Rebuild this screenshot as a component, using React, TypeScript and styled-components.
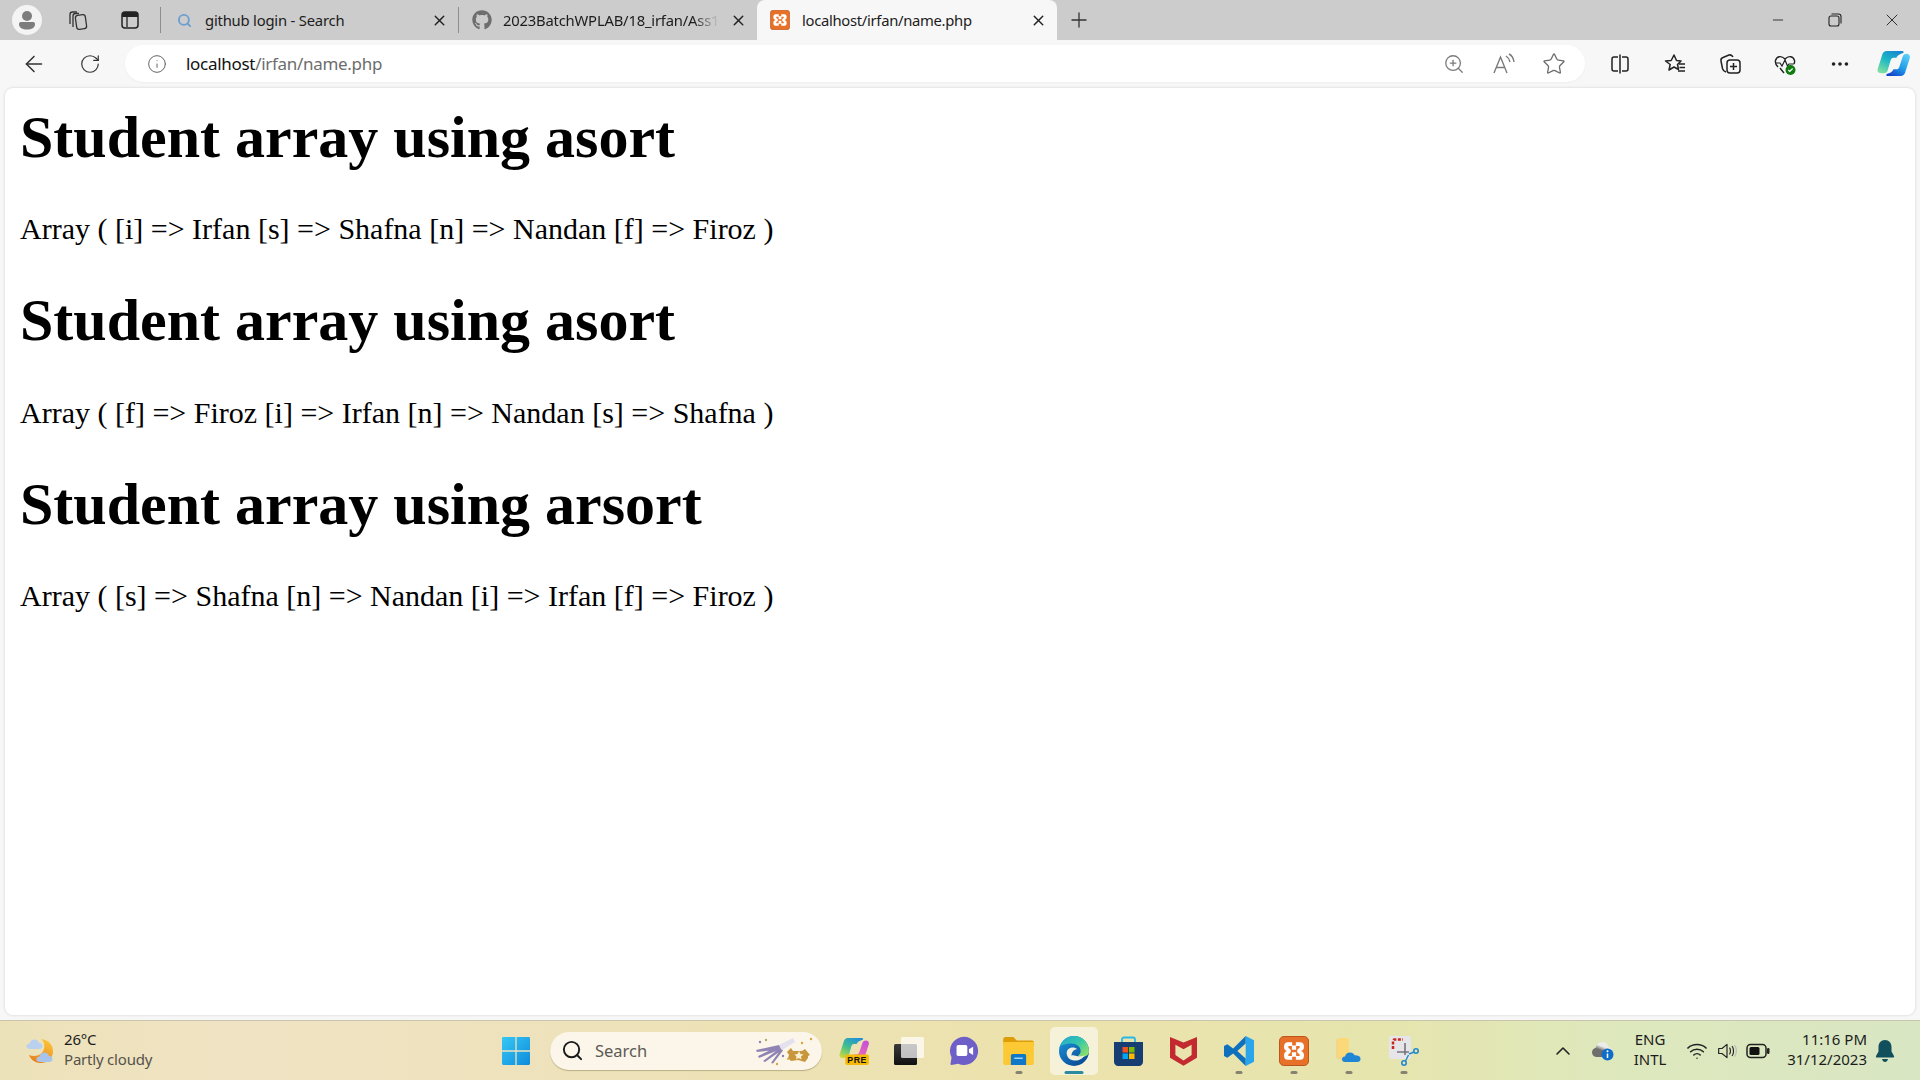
import React from 'react';
import styled, { createGlobalStyle } from 'styled-components';
import { FaGithub } from 'react-icons/fa';
import { ArrowLeft, RotateCw, Info, ZoomIn, Star, X, Plus, Minus, Search, ChevronUp, Wifi, Ellipsis } from 'lucide-react';

const GlobalStyle = createGlobalStyle`
  html, body { margin: 0; padding: 0; overflow: hidden; background: #f7f7f7; }
`;

const uiFont = `"Noto Sans", "Open Sans", sans-serif`;

const Shell = styled.div`
  width: 1920px;
  height: 1080px;
  display: flex;
  flex-direction: column;
  font-family: ${uiFont};
  color: #1c1c1c;
`;

/* tab strip */
const TabStrip = styled.div`
  height: 40px;
  flex: none;
  display: flex;
  background: #cccccc;
`;
const StripButtons = styled.div`
  width: 160px;
  flex: none;
  display: flex;
  align-items: center;
  padding-left: 8px;
  box-sizing: border-box;
`;
const StripButton = styled.div<{ $w: number }>`
  width: ${p => p.$w}px;
  flex: none;
  display: flex;
  align-items: center;
  justify-content: center;
`;
const Tab = styled.div<{ $w: number }>`
  width: ${p => p.$w}px;
  flex: none;
  display: flex;
  align-items: center;
  box-sizing: border-box;
  padding: 0 10px 0 13px;
  gap: 11px;
  font-size: 14.8px;
  letter-spacing: -0.2px;
`;
const InactiveTab = styled(Tab)`
  height: 26px;
  align-self: center;
  border-left: 1px solid #8e8e8e;
`;
const ActiveTab = styled(Tab)`
  background: #f7f7f7;
  border-radius: 8px 8px 0 0;
  gap: 12px;
  letter-spacing: -0.3px;
`;
const TabIcon = styled.div`
  width: 20px;
  flex: none;
  display: flex;
  align-items: center;
  justify-content: center;
`;
const TabTitle = styled.span<{ $fade?: boolean }>`
  flex: 1;
  min-width: 0;
  white-space: nowrap;
  ${p =>
    p.$fade
      ? `-webkit-mask-image: linear-gradient(to right, #000 88%, transparent 100%); mask-image: linear-gradient(to right, #000 88%, transparent 100%);`
      : ''}
`;
const WindowControls = styled.div`
  margin-left: auto;
  display: flex;
  align-items: center;
`;

/* toolbar */
const Toolbar = styled.div`
  height: 48px;
  flex: none;
  display: flex;
  align-items: flex-start;
  padding: 5px 0 0 6px;
  box-sizing: border-box;
  background: #f7f7f7;
`;
const ToolButton = styled.div<{ $w: number }>`
  width: ${p => p.$w}px;
  height: 37px;
  flex: none;
  display: flex;
  align-items: center;
  justify-content: center;
`;
const AddressBar = styled.div`
  width: 1460px;
  height: 37px;
  margin: 0 7px;
  flex: none;
  display: flex;
  align-items: center;
  box-sizing: border-box;
  padding: 0 6px 0 22px;
  background: #fff;
  border-radius: 19px;
  box-shadow: 0 1px 2px rgba(0, 0, 0, 0.04);
`;
const Url = styled.div`
  margin-left: 19px;
  font-size: 17px;
  letter-spacing: -0.3px;
  color: #6d6d6d;
  flex: 1;
  b {
    font-weight: 400;
    color: #111;
  }
`;

/* page content */
const Content = styled.div`
  flex: 1;
  min-height: 0;
  padding: 0 5px 5px;
  display: flex;
  background: #f7f7f7;
`;
const PageCard = styled.div`
  flex: 1;
  background: #fff;
  border-radius: 8px;
  box-shadow: 0 0 3px rgba(0, 0, 0, 0.16);
  padding: 15px 15px 0;
  font-family: "Liberation Serif", "Times New Roman", serif;
  color: #000;
`;
const Heading = styled.h1`
  font-size: 60px;
  font-weight: 700;
  margin: 0.67em 0;
  &:first-child {
    margin-top: 0;
  }
`;
const Output = styled.p`
  font-size: 30px;
  margin: 30px 0;
`;

/* taskbar */
const Taskbar = styled.div`
  height: 60px;
  flex: none;
  display: flex;
  align-items: center;
  box-sizing: border-box;
  border-top: 1px solid #c9c5ac;
  background: linear-gradient(90deg, #ece2b8 0%, #f0e3c4 12%, #eee2bb 30%, #ece2ac 55%, #e6e5ae 72%, #dde8bd 85%, #d9e6c3 100%);
  font-size: 15px;
`;
const Weather = styled.div`
  width: 488px;
  flex: none;
  display: flex;
  align-items: center;
  box-sizing: border-box;
  padding-left: 26px;
  gap: 8px;
`;
const WeatherText = styled.div`
  line-height: 20px;
  font-size: 15px;
  letter-spacing: -0.2px;
  margin-top: -4px;
  span {
    display: block;
    color: #55524a;
  }
`;
const TaskIcon = styled.div<{ $active?: boolean; $running?: boolean }>`
  width: ${p => (p.$active ? '48px' : '55px')};
  margin: ${p => (p.$active ? '0 3.5px' : '0')};
  height: 48px;
  flex: none;
  box-sizing: border-box;
  display: flex;
  align-items: center;
  justify-content: center;
  position: relative;
  border-radius: 5px;
  background: ${p => (p.$active ? 'rgba(255,255,255,.55)' : 'transparent')};
  &::after {
    content: '';
    display: ${p => (p.$running || p.$active ? 'block' : 'none')};
    position: absolute;
    bottom: 1px;
    left: 50%;
    transform: translateX(-50%);
    width: ${p => (p.$active ? '19px' : '7px')};
    height: 3px;
    border-radius: 2px;
    background: ${p => (p.$active ? '#2c8aa0' : '#85826f')};
  }
`;
const TaskbarSearch = styled.div`
  width: 272px;
  height: 38px;
  margin: 0 4px 0 7px;
  flex: none;
  box-sizing: border-box;
  display: flex;
  align-items: center;
  padding: 0 7px 0 11px;
  gap: 11px;
  border-radius: 19px;
  background: #fbf6e9;
  box-shadow: 0 1px 1px rgba(120, 110, 70, 0.45);
  font-size: 16.5px;
  color: #5d5a54;
`;
const SearchDecor = styled.div`
  margin-left: auto;
  display: flex;
`;
const Tray = styled.div`
  margin-left: auto;
  display: flex;
  align-items: center;
  padding-right: 17px;
`;
const TrayItem = styled.div<{ $w: number; $end?: boolean }>`
  width: ${p => p.$w}px;
  flex: none;
  display: flex;
  align-items: center;
  justify-content: ${p => (p.$end ? 'flex-end' : 'center')};
`;
const TrayText = styled.div<{ $align: string }>`
  line-height: 20px;
  font-size: 15px;
  margin-top: -3px;
  text-align: ${p => p.$align};
  white-space: nowrap;
`;

/* drawings */
const Avatar = () => (
  <svg width="30" height="30" viewBox="0 0 30 30">
    <circle cx="15" cy="15" r="15" fill="#f4f4f4" />
    <circle cx="15" cy="11" r="5" fill="#7d7d7d" />
    <path d="M7 19c0-1.500 1-2 2.500-2h11c1.500 0 2.500.5 2.500 2 0 4-3.500 5.500-8 5.500S7 23 7 19z" fill="#7d7d7d" />
  </svg>
);
const Workspaces = () => (
  <svg width="24" height="24" viewBox="0 0 24 24" fill="none" stroke="#333" strokeWidth="1.3">
    <path d="M5 16V6.500C5 5 6 4 7.500 4H12" />
    <path d="M8 19V8c0-1.500 1-2.500 2.500-2.500H14" />
    <rect x="11" y="7" width="10" height="14" rx="2.500" transform="rotate(-8 16 14)" />
  </svg>
);
const TabsIcon = () => (
  <svg width="22" height="22" viewBox="0 0 22 22" fill="none">
    <rect x="3" y="3" width="16" height="16" rx="3" stroke="#222" strokeWidth="1.500" />
    <path d="M3 6c0-2 1-3 3-3h10c2 0 3 1 3 3v2H3z" fill="#222" />
    <path d="M8 8v10" stroke="#222" strokeWidth="1.300" />
  </svg>
);
const Xampp = ({ size }: { size: number }) => (
  <svg width={size} height={size} viewBox="0 0 24 24">
    <rect x="0.400" y="0.400" width="23.200" height="23.200" rx="3.500" fill="#e8712a" stroke="#b9561c" strokeWidth="0.800" />
    <path
      d="M7 5h3.500v2.500h3V5H17c2 0 3 1.500 3 3.500 0 2-1 3-2.500 3.500 1.500.5 2.500 1.500 2.500 3.500S19 19 17 19h-3.500v-2.500h-3V19H7c-2 0-3-1.500-3-3.500S5 12.500 6.500 12C5 11.500 4 10.500 4 8.500S5 5 7 5z"
      fill="#fff"
    />
    <path d="M7.500 8h2.800v3h3.400V8h2.800v1.500c-1 .5-2 1-2 2.500s1 2 2 2.500V16h-2.800v-3h-3.400v3H7.500v-1.500c1-.5 2-1 2-2.500s-1-2-2-2.500z" fill="#e8712a" />
  </svg>
);
const SplitIcon = () => (
  <svg width="24" height="24" viewBox="0 0 24 24" fill="none" stroke="#222" strokeWidth="1.500">
    <path d="M10 5H6a2 2 0 0 0-2 2v10a2 2 0 0 0 2 2h4M14 5h4a2 2 0 0 1 2 2v10a2 2 0 0 1-2 2h-4M12 2.500v19" />
  </svg>
);
const FavoritesIcon = () => (
  <svg width="24" height="24" viewBox="0 0 24 24" fill="none" stroke="#222" strokeWidth="1.500" strokeLinejoin="round">
    <path d="M11 3l2.500 5.500 4.500.5-3.500 3.500 1 5-4.500-2.500-5 3 1.200-5.500L2.500 9l5.700-.5z" />
    <path d="M16 12h6M16.500 15.500H22M15 19h7" />
  </svg>
);
const CollectionsIcon = () => (
  <svg width="24" height="24" viewBox="0 0 24 24" fill="none" stroke="#222" strokeWidth="1.500">
    <path d="M8 20c-2-.5-3-1.500-3.500-3.500L3 9c-.4-2 .5-3 2-3.500L11 3c2-.5 3 0 4 2" />
    <rect x="9" y="8" width="13" height="13" rx="3" />
    <path d="M15.500 11v7M12 14.500h7" />
  </svg>
);
const HealthIcon = () => (
  <svg width="24" height="24" viewBox="0 0 24 24" fill="none">
    <path d="M5 15C3 13 2 11 2.500 8.500 3.500 4.500 8 3 12 7c4-4 8.500-2.500 9.500 1.500.3 1.500 0 2.500-.5 3.500" stroke="#222" strokeWidth="1.400" />
    <path d="M2.500 11H7l2 3 3-6 2.500 6 1.500-2h5" stroke="#222" strokeWidth="1.200" />
    <path d="M7 16l4 5" stroke="#222" strokeWidth="1.400" />
    <circle cx="17.500" cy="18" r="5" fill="#107c10" />
    <path d="M15.300 18l1.500 1.500 2.800-3" stroke="#fff" strokeWidth="1.200" />
  </svg>
);
const ReadAloud = () => (
  <svg width="24" height="24" viewBox="0 0 24 24" fill="none" stroke="#7b7b7b" strokeWidth="1.400">
    <path d="M2 21L8.500 5l6.500 16M4.500 15.500h8" />
    <path d="M14 4c2.500 1.500 3.500 3.500 4 6M17 2c3 1.500 4.500 4.500 5 8" />
  </svg>
);

const ribbonLeft = 'M10 1h16c1.500 0 2 1 1 2-3 1-6 2-7 5h-3c-1.500 0-2.500 1-3 2.500L11 21c-.5 2-2 3-4 3H4c-3 0-4-2-3.500-4L5 6c.5-3 2.500-5 5-5z';
const ribbonRight = 'M24 27H11c-1.500 0-2-1-1-2 3-1 6-2 7-5h3c1.500 0 2.500-1 3-2.500L26.500 7c.5-2 2-3 4-3c2.500 0 4 2 3.500 4L29.500 22c-.5 3-2.500 5-5.500 5z';

const CopilotIcon = () => (
  <svg width="33" height="27" viewBox="0 0 34 28">
    <defs>
      <linearGradient id="cpA" x1="0.800" y1="0" x2="0.200" y2="1">
        <stop offset="0" stopColor="#1786d0" />
        <stop offset="0.500" stopColor="#1fb8c4" />
        <stop offset="1" stopColor="#7fe0a0" />
      </linearGradient>
      <linearGradient id="cpB" x1="0.800" y1="0" x2="0.200" y2="1">
        <stop offset="0" stopColor="#5ccdf7" />
        <stop offset="0.550" stopColor="#1e9be8" />
        <stop offset="1" stopColor="#1440c8" />
      </linearGradient>
    </defs>
    <path d={ribbonLeft} fill="url(#cpA)" />
    <path d={ribbonRight} fill="url(#cpB)" />
  </svg>
);
const WeatherIcon = () => (
  <svg width="30" height="28" viewBox="0 0 30 28">
    <defs>
      <linearGradient id="moon" x1="0.700" y1="0" x2="0.300" y2="1">
        <stop offset="0" stopColor="#fbc63c" />
        <stop offset="1" stopColor="#e8801c" />
      </linearGradient>
    </defs>
    <path d="M15 2c7 .5 12 5.500 12 12 0 7.500-6 12-12 12-5 0-10-2.500-12-8 7 2.500 13 0 15-6 1-4 0-7.500-3-10z" fill="url(#moon)" />
    <path d="M4 12c-2 0-3.500-1-3.500-2.800S2 6.500 3.500 6.500C4.300 4 6 2.500 8.500 2.500c2.500 0 4 1.500 4.500 3.500 2 0 3.500 1.200 3.500 3 0 2-1.500 3-3.500 3z" fill="#b9d0ee" />
    <path d="M14 25c-2 0-3.500-1-3.500-2.800s1.500-2.700 3-2.700c.8-2.500 2.500-4 5-4 2.500 0 4 1.500 4.500 3.500 2 0 3.500 1.200 3.500 3 0 2-1.500 3-3.500 3z" fill="#a9c4ec" />
  </svg>
);
const StartIcon = () => (
  <svg width="28" height="28" viewBox="0 0 30 30">
    <defs>
      <linearGradient id="winA" x1="0" y1="0" x2="1" y2="1">
        <stop offset="0" stopColor="#35c8f5" />
        <stop offset="1" stopColor="#0f8bdc" />
      </linearGradient>
    </defs>
    <path d="M0 1.500C0 .5.500 0 1.500 0H14.300v14.300H0zM15.700 0H28.500c1 0 1.500.5 1.500 1.500V14.300H15.700zM0 15.700h14.300V30H1.500C.5 30 0 29.500 0 28.500zM15.700 15.700H30V28.500c0 1-.5 1.500-1.500 1.500H15.700z" fill="url(#winA)" />
  </svg>
);
const CandyDecor = () => (
  <svg width="60" height="30" viewBox="0 0 60 30">
    <path d="M24 9L38 2l2 4-13 8z" fill="#e4e0ee" />
    <path d="M24 9L1 14l1 2 24-3zM24 10L3 20l1 2 22-9zM25 12L8 25l2 1 17-12zM26 13L16 27l2 .5 10-13z" fill="#8f84b4" />
    <path d="M32 16l4-4 2 3 9 0 3-2 5 6-2 1 0 2-3 4-7-2-7 1-3-3 1-3z" fill="#c8963c" />
    <path d="M44 15l1.500 3 3 .5-2.500 2 .5 3-3-1.500-2.500 1.500.5-3-2-2 3-.5z" fill="#f8f0d0" />
    <circle cx="11" cy="4" r="1.200" fill="#b9a86c" />
    <circle cx="5" cy="6" r="1.200" fill="#8d7db5" />
    <circle cx="28" cy="20" r="1.200" fill="#8d7db5" />
    <circle cx="22" cy="28" r="1.200" fill="#d8a63c" />
    <circle cx="33" cy="23" r="1" fill="#d8a63c" />
    <circle cx="47" cy="7" r="1.200" fill="#d8a63c" />
    <circle cx="56" cy="3" r="1.200" fill="#d8a63c" />
  </svg>
);
const CopilotPre = () => (
  <svg width="30" height="28" viewBox="0 0 34 32">
    <defs>
      <linearGradient id="cpL" x1="0.800" y1="0" x2="0.200" y2="1">
        <stop offset="0" stopColor="#1f8fdc" />
        <stop offset="0.550" stopColor="#42c08c" />
        <stop offset="1" stopColor="#c8d840" />
      </linearGradient>
      <linearGradient id="cpR" x1="0.800" y1="0" x2="0.200" y2="1">
        <stop offset="0" stopColor="#c84fd8" />
        <stop offset="1" stopColor="#f478a8" />
      </linearGradient>
    </defs>
    <path d={ribbonLeft} fill="url(#cpL)" />
    <path d={ribbonRight} fill="url(#cpR)" />
    <rect x="7" y="20" width="27" height="12" rx="2" fill="#f5b908" />
    <text x="20.500" y="30" fontFamily="Liberation Sans, sans-serif" fontWeight="700" fontSize="10" textAnchor="middle" letterSpacing="0.600" fill="#111">PRE</text>
  </svg>
);
const TaskView = () => (
  <svg width="30" height="28" viewBox="0 0 30 28">
    <defs>
      <linearGradient id="tvB" x1="0" y1="0" x2="0" y2="1">
        <stop offset="0" stopColor="#3a3a3a" />
        <stop offset="1" stopColor="#111" />
      </linearGradient>
    </defs>
    <rect x="0" y="7" width="23" height="21" rx="1.500" fill="url(#tvB)" />
    <rect x="7" y="0" width="23" height="21" rx="1.500" fill="#fff" fillOpacity="0.72" />
  </svg>
);
const MeetIcon = () => (
  <svg width="30" height="29" viewBox="0 0 36 35">
    <path d="M18 1a17 17 0 1 1-7 32.500L3 35c-1 0-1.500-.5-1.300-1.500L3 26A17 17 0 0 1 18 1z" fill="#6d5fc7" />
    <rect x="9" y="11" width="13" height="13" rx="2" fill="#fff" />
    <path d="M24 16l5-3v10l-5-3z" fill="#fff" />
  </svg>
);
const FolderIcon = () => (
  <svg width="31" height="28" viewBox="0 0 36 33">
    <path d="M0 3c0-1.500 1-3 3-3h9l4 4h18c1 0 2 1 2 2v4H0z" fill="#dd9d06" />
    <path d="M0 6h36v25c0 1.500-1 2-2 2H2c-1 0-2-.5-2-2z" fill="#fcc934" />
    <path d="M9 22c0-1 1-2 2-2h14c1 0 2 1 2 2v11H9z" fill="#0f78c8" />
    <path d="M13 25h10" stroke="#bfe3ff" strokeWidth="1.500" />
  </svg>
);
const EdgeIcon = () => (
  <svg width="30" height="30" viewBox="0 0 36 36">
    <defs>
      <linearGradient id="edA" x1="0" y1="0" x2="1" y2="0.800">
        <stop offset="0" stopColor="#1fa4d8" />
        <stop offset="0.550" stopColor="#36c8a8" />
        <stop offset="1" stopColor="#8de06a" />
      </linearGradient>
      <linearGradient id="edB" x1="0" y1="0" x2="0.700" y2="1">
        <stop offset="0" stopColor="#1a9be0" />
        <stop offset="1" stopColor="#0b4a96" />
      </linearGradient>
    </defs>
    <circle cx="18" cy="18" r="18" fill="url(#edB)" />
    <path d="M1 14C3 5 10 0 18 0c10 0 18 8 18 18 0 5-4 7-8 7-3 0-5-1-5-2 2-1 3-3 3-5 0-5-5-9-11-9-7 0-13 2-15 5z" fill="url(#edA)" />
    <path d="M15 24c0-5 3-8 7-8-3-3-8-3-11 0-3 3-2 8 1 11 3 2.500 8 3 11 2 3-1 6-3 8-6-3 1-6 2-10 1-3-.5-6-2-6-0z" fill="#f4f0de" />
  </svg>
);
const StoreIcon = () => (
  <svg width="29" height="30" viewBox="0 0 29 30">
    <path d="M8 7V3.500C8 2 9 1.500 10 1.500h9c1 0 2 .5 2 2V7" fill="none" stroke="#28b8e8" strokeWidth="1.800" />
    <path d="M0 6h29v20c0 2-2 4-4 4H4c-2 0-4-2-4-4z" fill="#163e72" />
    <rect x="8.500" y="11" width="5.500" height="5.500" fill="#f25022" />
    <rect x="15" y="11" width="5.500" height="5.500" fill="#7fba00" />
    <rect x="8.500" y="17.500" width="5.500" height="5.500" fill="#00a4ef" />
    <rect x="15" y="17.500" width="5.500" height="5.500" fill="#ffb900" />
  </svg>
);
const McAfeeIcon = () => (
  <svg width="27" height="30" viewBox="0 0 30 33">
    <path d="M0 1l15 6 15-6v23L15 33 0 24zM6 9.500v11.500l9 6 9-6V9.500l-9 5z" fill="#c22a30" fillRule="evenodd" />
  </svg>
);
const VsCodeIcon = () => (
  <svg width="30" height="30" viewBox="0 0 36 36">
    <path d="M26 0l10 5v26l-10 5z" fill="#2aa5ec" />
    <path d="M26 0L11 15 4 10 0 12v12l4 2 7-5 15 15v-9L16 18 26 9z" fill="#0f71bd" />
  </svg>
);
const OneDriveFolder = () => (
  <svg width="25" height="25" viewBox="0 0 25 25">
    <path d="M0 1l9 3v20l-9-4z" fill="#f3d68a" />
    <path d="M2 0h9c1 0 2 1 2 2v17H7l-5-2z" fill="#fbd878" />
    <path d="M9 24c-2 0-3-1.500-3-2.800S7 18.500 9 18.500c.7-2.500 2.500-4 5-4 2.200 0 3.700 1 4.500 2.700 3.500 0 6 1 6 3.800S22 24 20 24z" fill="#1f86d6" />
  </svg>
);
const SnipIcon = () => (
  <svg width="30" height="30" viewBox="0 0 30 30">
    <rect x="0" y="0" width="22" height="23" rx="2.500" fill="#e6e6ea" />
    <path d="M4 13V5c0-.8.5-1.500 1.500-1.500H14" fill="none" stroke="#c8281e" strokeWidth="2.500" strokeDasharray="3 1.500" />
    <path d="M16 7v12M8 16h12" stroke="#75757b" strokeWidth="1.600" />
    <circle cx="27" cy="15" r="2.200" fill="none" stroke="#2288d0" strokeWidth="1.600" />
    <circle cx="15" cy="27" r="2.200" fill="none" stroke="#2288d0" strokeWidth="1.600" />
    <path d="M16.500 25l3-6M25 16l-5 2" stroke="#2288d0" strokeWidth="1.400" />
  </svg>
);
const CloudInfo = () => (
  <svg width="22" height="20" viewBox="0 0 22 20">
    <defs>
      <linearGradient id="cloudFill" x1="0.700" y1="0" x2="0.200" y2="1">
        <stop offset="0.300" stopColor="#ececea" />
        <stop offset="0.550" stopColor="#6e6e6c" />
      </linearGradient>
    </defs>
    <path d="M5 16c-3 0-5-2-5-4.500S1.500 7.500 3.500 7C4.500 3 7 1 10 1c3.500 0 6 2 6.500 5 2 .5 3.500 2 3.500 4 0 3-2 6-4 6z" fill="url(#cloudFill)" />
    <circle cx="15.500" cy="13.500" r="6" fill="#0f6cc8" />
    <path d="M15.500 12.500v4.500" stroke="#fff" strokeWidth="1.500" />
    <circle cx="15.500" cy="10.300" r="1" fill="#fff" />
  </svg>
);
const Speaker = () => (
  <svg width="24" height="22" viewBox="0 0 24 22" fill="none" stroke="#222" strokeWidth="1.400">
    <path d="M2 8h4l6-5v16l-6-5H2z" strokeLinejoin="round" />
    <path d="M15 7c1.500 2 1.500 6 0 8" />
    <path d="M18 5c2.500 3 2.500 9 0 12" />
    <path d="M21 4c3 4 3 10 0 14" stroke="#bbb" />
  </svg>
);
const Battery = () => (
  <svg width="24" height="16" viewBox="0 0 24 16">
    <rect x="1" y="1.500" width="19" height="13" rx="3.500" fill="none" stroke="#222" strokeWidth="1.500" />
    <rect x="3.500" y="4" width="10" height="8" rx="1.500" fill="#111" />
    <rect x="21" y="5" width="2.500" height="6" rx="1.200" fill="#222" />
  </svg>
);
const Bell = () => (
  <svg width="20" height="24" viewBox="0 0 20 24">
    <path d="M10 1c-4 0-6.500 3-6.500 7v4.500L1 17c-.4.800 0 1.500 1 1.500h16c1 0 1.400-.7 1-1.500l-2.500-4.500V8c0-4-2.500-7-6.500-7z" fill="#114f5c" />
    <path d="M7 20h6c-.5 2-1.500 3-3 3s-2.500-1-3-3z" fill="#114f5c" />
  </svg>
);

const headings = [
  { title: 'Student array using asort', text: 'Array ( [i] => Irfan [s] => Shafna [n] => Nandan [f] => Firoz )' },
  { title: 'Student array using asort', text: 'Array ( [f] => Firoz [i] => Irfan [n] => Nandan [s] => Shafna )' },
  { title: 'Student array using arsort', text: 'Array ( [s] => Shafna [n] => Nandan [i] => Irfan [f] => Firoz )' },
];

export default function App() {
  return (
    <Shell>
      <GlobalStyle />
      <TabStrip>
        <StripButtons>
          <StripButton $w={38}><Avatar /></StripButton>
          <StripButton $w={62}><Workspaces /></StripButton>
          <StripButton $w={44}><TabsIcon /></StripButton>
        </StripButtons>
        <InactiveTab $w={298}>
          <TabIcon><Search size={15} color="#6b9fd1" strokeWidth={3} /></TabIcon>
          <TabTitle>github login - Search</TabTitle>
          <X size={17} color="#222" />
        </InactiveTab>
        <InactiveTab $w={299}>
          <TabIcon><FaGithub size={20} color="#6e6e6e" /></TabIcon>
          <TabTitle $fade>2023BatchWPLAB/18_irfan/Ass12</TabTitle>
          <X size={17} color="#222" />
        </InactiveTab>
        <ActiveTab $w={300}>
          <TabIcon><Xampp size={20} /></TabIcon>
          <TabTitle>localhost/irfan/name.php</TabTitle>
          <X size={17} color="#222" />
        </ActiveTab>
        <StripButton $w={44}><Plus size={24} color="#333" strokeWidth={1.3} /></StripButton>
        <WindowControls>
          <StripButton $w={57}><Minus size={16} color="#222" strokeWidth={1.3} /></StripButton>
          <StripButton $w={57}>
            <svg width="14" height="14" viewBox="0 0 14 14" fill="none" stroke="#222" strokeWidth="1.100">
              <rect x="1" y="3" width="10" height="10" rx="2" />
              <path d="M3.500 1h7c1.500 0 2.500 1 2.500 2.500v7" />
            </svg>
          </StripButton>
          <StripButton $w={57}><X size={20} color="#222" strokeWidth={1.100} /></StripButton>
        </WindowControls>
      </TabStrip>

      <Toolbar>
        <ToolButton $w={56}><ArrowLeft size={26} color="#333" strokeWidth={1.400} /></ToolButton>
        <ToolButton $w={56}><RotateCw size={22} color="#333" strokeWidth={1.300} /></ToolButton>
        <AddressBar>
          <Info size={20} color="#666" strokeWidth={1.200} />
          <Url><b>localhost</b>/irfan/name.php</Url>
          <ToolButton $w={50}><ZoomIn size={22} color="#7b7b7b" strokeWidth={1.400} /></ToolButton>
          <ToolButton $w={50}><ReadAloud /></ToolButton>
          <ToolButton $w={50}><Star size={24} color="#6c6c6c" strokeWidth={1.300} /></ToolButton>
        </AddressBar>
        <ToolButton $w={55}><SplitIcon /></ToolButton>
        <ToolButton $w={55}><FavoritesIcon /></ToolButton>
        <ToolButton $w={55}><CollectionsIcon /></ToolButton>
        <ToolButton $w={55}><HealthIcon /></ToolButton>
        <ToolButton $w={55}><Ellipsis size={22} color="#222" /></ToolButton>
        <ToolButton $w={53}><CopilotIcon /></ToolButton>
      </Toolbar>

      <Content>
        <PageCard>
          {headings.map((h, i) => (
            <React.Fragment key={i}>
              <Heading>{h.title}</Heading>
              <Output>{h.text}</Output>
            </React.Fragment>
          ))}
        </PageCard>
      </Content>

      <Taskbar>
        <Weather>
          <WeatherIcon />
          <WeatherText>
            26°C
            <span>Partly cloudy</span>
          </WeatherText>
        </Weather>
        <TaskIcon><StartIcon /></TaskIcon>
        <TaskbarSearch>
          <Search size={23} color="#1a1a1a" strokeWidth={2} />
          Search
          <SearchDecor><CandyDecor /></SearchDecor>
        </TaskbarSearch>
        <TaskIcon><CopilotPre /></TaskIcon>
        <TaskIcon><TaskView /></TaskIcon>
        <TaskIcon><MeetIcon /></TaskIcon>
        <TaskIcon $running><FolderIcon /></TaskIcon>
        <TaskIcon $active><EdgeIcon /></TaskIcon>
        <TaskIcon><StoreIcon /></TaskIcon>
        <TaskIcon><McAfeeIcon /></TaskIcon>
        <TaskIcon $running><VsCodeIcon /></TaskIcon>
        <TaskIcon $running><Xampp size={30} /></TaskIcon>
        <TaskIcon $running><OneDriveFolder /></TaskIcon>
        <TaskIcon $running><SnipIcon /></TaskIcon>
        <Tray>
          <TrayItem $w={40}><ChevronUp size={24} color="#222" strokeWidth={1.600} /></TrayItem>
          <TrayItem $w={40}><CloudInfo /></TrayItem>
          <TrayItem $w={54}><TrayText $align="center">ENG<br />INTL</TrayText></TrayItem>
          <TrayItem $w={40}><Wifi size={22} color="#222" strokeWidth={1.600} /></TrayItem>
          <TrayItem $w={20}><Speaker /></TrayItem>
          <TrayItem $w={42}><Battery /></TrayItem>
          <TrayItem $w={88} $end><TrayText $align="right">11:16 PM<br />31/12/2023</TrayText></TrayItem>
          <TrayItem $w={36}><Bell /></TrayItem>
        </Tray>
      </Taskbar>
    </Shell>
  );
}
